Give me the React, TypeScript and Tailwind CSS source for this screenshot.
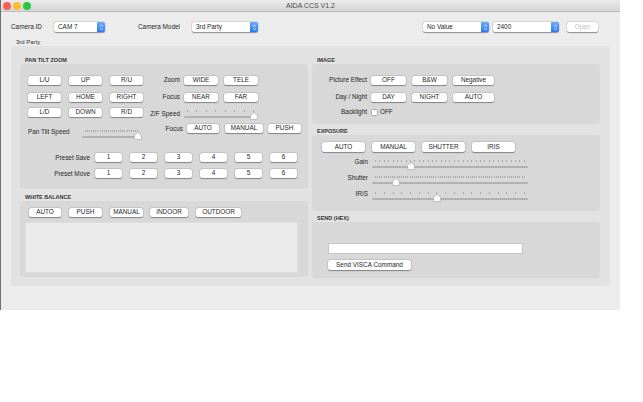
import { ReactNode } from 'react';

function Btn({
    className = '',
    children,
    disabled = false,
}: {
    className?: string;
    children: ReactNode;
    disabled?: boolean;
}) {
    return (
        <div
            className={`flex h-[9px] shrink-0 items-center justify-center rounded-[2px] bg-white text-[6.4px] leading-none shadow-[0_0.5px_1px_rgba(0,0,0,0.35),0_0_0_0.5px_rgba(0,0,0,0.12)] ${
                disabled ? 'text-[#c2c2c2]' : 'text-[#262626]'
            } ${className}`}
        >
            {children}
        </div>
    );
}

function Select({ className = '', value }: { className?: string; value: string }) {
    return (
        <div
            className={`flex h-[10px] shrink-0 items-center rounded-[2px] bg-white shadow-[0_0.5px_1px_rgba(0,0,0,0.35),0_0_0_0.5px_rgba(0,0,0,0.12)] ${className}`}
        >
            <span className="flex-1 pl-[4px] text-[6.4px] leading-none text-[#262626]">{value}</span>
            <div className="flex h-full w-[8px] items-center justify-center rounded-r-[2px] bg-gradient-to-b from-[#6cacfc] to-[#2677f0]">
                <svg width="5" height="7" viewBox="0 0 5 7">
                    <path d="M1 2.6 L2.5 1.2 L4 2.6 M1 4.4 L2.5 5.8 L4 4.4" fill="none" stroke="white" strokeWidth="0.8" />
                </svg>
            </div>
        </div>
    );
}

function Slider({
    className,
    ticks,
    pos,
}: {
    className: string;
    ticks: number;
    pos: number;
}) {
    return (
        <div className={`relative h-[10px] shrink-0 ${className}`}>
            <div className="flex justify-between px-[3px]">
                {Array.from({ length: ticks }).map((_, i) => (
                    <div key={i} className="h-[2px] w-[1px] bg-[#a9a9a9]" />
                ))}
            </div>
            <div className="absolute top-[6px] right-0 left-0 h-[1.5px] rounded-full bg-[#b2b2b2]" />
            <svg
                className="absolute top-[2px]"
                style={{ left: pos - 4 }}
                width="8"
                height="8"
                viewBox="0 0 8 8"
            >
                <path
                    d="M0.6 3.2 L4 0.5 L7.4 3.2 L7.4 7.1 Q7.4 7.5 7 7.5 L1 7.5 Q0.6 7.5 0.6 7.1 Z"
                    fill="white"
                    stroke="#a3a3a3"
                    strokeWidth="0.6"
                />
            </svg>
        </div>
    );
}

function Title({ children }: { children: ReactNode }) {
    return (
        <div className="h-[8px] pl-[5px] text-[5.5px] leading-[8px] font-bold text-[#333]">
            {children}
        </div>
    );
}

function Label({
    className,
    left = false,
    children,
}: {
    className: string;
    left?: boolean;
    children: ReactNode;
}) {
    return (
        <span
            className={`shrink-0 text-[6.4px] leading-[10px] whitespace-nowrap text-[#262626] ${
                left ? 'text-left' : 'text-right'
            } ${className}`}
        >
            {children}
        </span>
    );
}

const presets = ['1', '2', '3', '4', '5', '6'];

export default function App() {
    return (
        <div className="min-h-screen bg-white font-['Liberation_Sans',Arial,sans-serif]">
            <div className="flex h-[310px] w-[620px] flex-col border-l border-[#6f6f6f] bg-[#ececec]">
                {/* title bar */}
                <div className="grid h-[12px] grid-cols-[1fr_auto_1fr] items-center border-b border-[#bdbdbd] bg-gradient-to-b from-[#ebebeb] to-[#d6d6d6]">
                    <div className="flex items-center gap-[2px] pl-[2px]">
                        <div className="h-[8px] w-[8px] rounded-full bg-[#fc5f57]" />
                        <div className="h-[8px] w-[8px] rounded-full bg-[#fdbc2e]" />
                        <div className="h-[8px] w-[8px] rounded-full bg-[#29c840]" />
                    </div>
                    <div className="text-[7px] leading-none text-[#4a4a4a]">AIDA CCS V1.2</div>
                    <div />
                </div>

                {/* top row */}
                <div className="mt-[10px] flex h-[10px] items-center pr-[22px] pl-[10px]">
                    <Label className="w-[43px]" left>
                        Camera ID
                    </Label>
                    <Select className="w-[51px]" value="CAM 7" />
                    <Label className="ml-[33px] w-[54px]" left>
                        Camera Model
                    </Label>
                    <Select className="w-[66px]" value="3rd Party" />
                    <div className="ml-auto flex items-center">
                        <Select className="w-[66px]" value="No Value" />
                        <Select className="ml-[4px] w-[66px]" value="2400" />
                        <Btn className="ml-[8px] h-[10px] w-[31px]" disabled>
                            Open
                        </Btn>
                    </div>
                </div>

                <div className="mt-[7px] h-[7px] pl-[15px] text-[6px] leading-[7px] text-[#333]">3rd Party</div>

                {/* outer box */}
                <div className="ml-[10px] flex h-[240px] w-[599px] gap-[4px] rounded-[3px] bg-[#e2e2e2] pt-[10px] pl-[9px]">
                    {/* left column */}
                    <div className="flex w-[288px] flex-col">
                        <Title>PAN TILT ZOOM</Title>
                        <div className="flex h-[125px] flex-col rounded-[3px] bg-[#d8d8d8] pl-[8px]">
                            <div className="mt-[11px] flex h-[10px] items-center">
                                <Btn className="w-[33px]">L/U</Btn>
                                <Btn className="ml-[8px] w-[33px]">UP</Btn>
                                <Btn className="ml-[8px] w-[33px]">R/U</Btn>
                                <Label className="w-[37px]">Zoom</Label>
                                <Btn className="ml-[4px] w-[34px]">WIDE</Btn>
                                <Btn className="ml-[6px] w-[34px]">TELE</Btn>
                            </div>
                            <div className="mt-[7px] flex h-[10px] items-center">
                                <Btn className="w-[33px]">LEFT</Btn>
                                <Btn className="ml-[8px] w-[33px]">HOME</Btn>
                                <Btn className="ml-[8px] w-[33px]">RIGHT</Btn>
                                <Label className="w-[37px]">Focus</Label>
                                <Btn className="ml-[4px] w-[34px]">NEAR</Btn>
                                <Btn className="ml-[6px] w-[34px]">FAR</Btn>
                            </div>
                            <div className="mt-[6px] flex h-[10px] items-start">
                                <Btn className="w-[33px]">L/D</Btn>
                                <Btn className="ml-[8px] w-[33px]">DOWN</Btn>
                                <Btn className="ml-[8px] w-[33px]">R/D</Btn>
                                <Label className="mt-[1px] w-[37px]">Z/F Speed</Label>
                                <Slider className="mt-[2px] ml-[4px] w-[73px]" ticks={8} pos={70} />
                            </div>
                            <div className="mt-[6px] flex h-[16px] items-start">
                                <Label className="mt-[3px] w-[54px]" left>
                                    Pan Tilt Speed
                                </Label>
                                <Slider className="mt-[6px] w-[59px]" ticks={26} pos={56} />
                                <Label className="w-[42px]">Focus</Label>
                                <Btn className="ml-[4px] w-[32px]">AUTO</Btn>
                                <Btn className="ml-[6px] w-[38px]">MANUAL</Btn>
                                <Btn className="ml-[5px] w-[33px]">PUSH</Btn>
                            </div>
                            <div className="mt-[13px] flex h-[9px] items-center">
                                <Label className="w-[62px]">Preset Save</Label>
                                {presets.map((n, i) => (
                                    <Btn key={n} className={`w-[27px] ${i === 0 ? 'ml-[5px]' : 'ml-[8px]'}`}>
                                        {n}
                                    </Btn>
                                ))}
                            </div>
                            <div className="mt-[7px] flex h-[9px] items-center">
                                <Label className="w-[62px]">Preset Move</Label>
                                {presets.map((n, i) => (
                                    <Btn key={n} className={`w-[27px] ${i === 0 ? 'ml-[5px]' : 'ml-[8px]'}`}>
                                        {n}
                                    </Btn>
                                ))}
                            </div>
                        </div>

                        <div className="mt-[4px]">
                            <Title>WHITE BALANCE</Title>
                        </div>
                        <div className="flex h-[76px] flex-col rounded-[3px] bg-[#d8d8d8]">
                            <div className="mt-[7px] flex h-[9px] items-center pl-[9px]">
                                <Btn className="w-[32px]">AUTO</Btn>
                                <Btn className="ml-[8px] w-[33px]">PUSH</Btn>
                                <Btn className="ml-[8px] w-[33px]">MANUAL</Btn>
                                <Btn className="ml-[7px] w-[38px]">INDOOR</Btn>
                                <Btn className="ml-[8px] w-[45px]">OUTDOOR</Btn>
                            </div>
                            <div className="mt-[5px] ml-[5px] h-[51px] w-[273px] border border-[#dedede] bg-[#ebebeb]" />
                        </div>
                    </div>

                    {/* right column */}
                    <div className="flex w-[288px] flex-col">
                        <Title>IMAGE</Title>
                        <div className="flex h-[60px] flex-col rounded-[3px] bg-[#d8d8d8]">
                            <div className="mt-[11px] flex h-[10px] items-center">
                                <Label className="w-[55px]">Picture Effect</Label>
                                <Btn className="ml-[4px] w-[35px]">OFF</Btn>
                                <Btn className="ml-[6px] w-[35px]">B&amp;W</Btn>
                                <Btn className="ml-[6px] w-[41px]">Negative</Btn>
                            </div>
                            <div className="mt-[7px] flex h-[10px] items-center">
                                <Label className="w-[55px]">Day / Night</Label>
                                <Btn className="ml-[4px] w-[35px]">DAY</Btn>
                                <Btn className="ml-[6px] w-[35px]">NIGHT</Btn>
                                <Btn className="ml-[6px] w-[41px]">AUTO</Btn>
                            </div>
                            <div className="mt-[5px] flex h-[10px] items-center">
                                <Label className="w-[55px]">Backlight</Label>
                                <div className="ml-[4px] h-[7px] w-[7px] rounded-[1.5px] border-[0.5px] border-[#a8a8a8] bg-white" />
                                <span className="ml-[2px] text-[6.4px] text-[#262626]">OFF</span>
                            </div>
                        </div>

                        <div className="mt-[3px]">
                            <Title>EXPOSURE</Title>
                        </div>
                        <div className="flex h-[76px] flex-col rounded-[3px] bg-[#d8d8d8]">
                            <div className="mt-[7px] flex h-[10px] items-center pl-[10px]">
                                <Btn className="h-[10px] w-[43px]">AUTO</Btn>
                                <Btn className="ml-[7px] h-[10px] w-[43px]">MANUAL</Btn>
                                <Btn className="ml-[7px] h-[10px] w-[43px]">SHUTTER</Btn>
                                <Btn className="ml-[7px] h-[10px] w-[43px]">IRIS</Btn>
                            </div>
                            <div className="mt-[5px] flex h-[16px] items-start">
                                <Label className="w-[56px]">Gain</Label>
                                <Slider className="mt-[3px] ml-[4px] w-[156px]" ticks={35} pos={39} />
                            </div>
                            <div className="flex h-[16px] items-start">
                                <Label className="w-[56px]">Shutter</Label>
                                <Slider className="mt-[3px] ml-[4px] w-[156px]" ticks={70} pos={24} />
                            </div>
                            <div className="flex h-[16px] items-start">
                                <Label className="w-[56px]">IRIS</Label>
                                <Slider className="mt-[3px] ml-[4px] w-[156px]" ticks={18} pos={65} />
                            </div>
                        </div>

                        <div className="mt-[3px]">
                            <Title>SEND (HEX)</Title>
                        </div>
                        <div className="flex h-[56px] flex-col rounded-[3px] bg-[#d8d8d8] pl-[16px]">
                            <div className="mt-[21px] h-[11px] w-[195px] border border-[#c4c4c4] bg-white" />
                            <Btn className="mt-[6px] h-[10px] w-[83px]">Send VISCA Command</Btn>
                        </div>
                    </div>
                </div>
            </div>
        </div>
    );
}
